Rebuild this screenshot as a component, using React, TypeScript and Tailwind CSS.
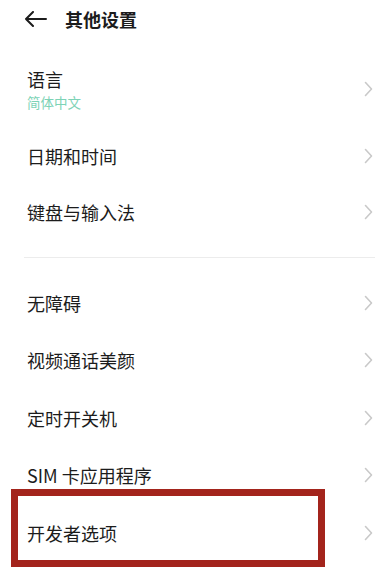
import React from 'react';

const font = { fontFamily: '"Noto Sans CJK SC", "Noto Sans", sans-serif' };

function Chevron() {
    return (
        <svg width="9" height="16" viewBox="0 0 9 16" className="shrink-0">
            <polyline points="1.5,1.5 7.5,8 1.5,14.5" fill="none" stroke="#c9c9c9" strokeWidth="1.6" strokeLinecap="round" strokeLinejoin="round" />
        </svg>
    );
}

function Row({ label, h = 'h-[56px]' }: { label: string; h?: string }) {
    return (
        <div className={`flex items-center justify-between pl-[27px] pr-[12px] ${h}`}>
            <span className="text-[18px] leading-[22px] text-[#1c1c1c]">{label}</span>
            <Chevron />
        </div>
    );
}

export default function App() {
    const lower = ['无障碍', '视频通话美颜', '定时开关机', 'SIM 卡应用程序', '开发者选项'];

    return (
        <div className="relative w-[385px] h-[574px] bg-white overflow-hidden" style={font}>
            {/* header */}
            <div className="flex items-center h-[38px] pl-[24px]">
                <svg width="23" height="16" viewBox="0 0 23 16">
                    <path d="M22 8H2M9 1L2 8l7 7" fill="none" stroke="#1c1c1c" strokeWidth="2" strokeLinecap="round" strokeLinejoin="round" />
                </svg>
                <span className="ml-[18px] text-[18px] font-bold text-[#1c1c1c]">其他设置</span>
            </div>

            {/* language */}
            <div className="mt-[12px] h-[78px] flex items-center justify-between pl-[27px] pr-[12px]">
                <div className="flex flex-col gap-[4px]">
                    <span className="text-[18px] leading-[22px] text-[#1c1c1c]">语言</span>
                    <span className="text-[13.5px] leading-[16px] text-[#7dd3b6]">简体中文</span>
                </div>
                <Chevron />
            </div>

            <Row label="日期和时间" />
            <Row label="键盘与输入法" />

            <div className="mt-[17px] ml-[24px] mr-[10px] h-px bg-[#ececec]" />

            <div className="mt-[16px]">
                {lower.map((l) => (
                    <Row key={l} label={l} h="h-[57.5px]" />
                ))}
            </div>

            {/* highlight annotation */}
            <div className="absolute left-[11px] top-[489px] w-[314px] h-[78px] border-[7px] border-[#a3241c]" />
        </div>
    );
}
